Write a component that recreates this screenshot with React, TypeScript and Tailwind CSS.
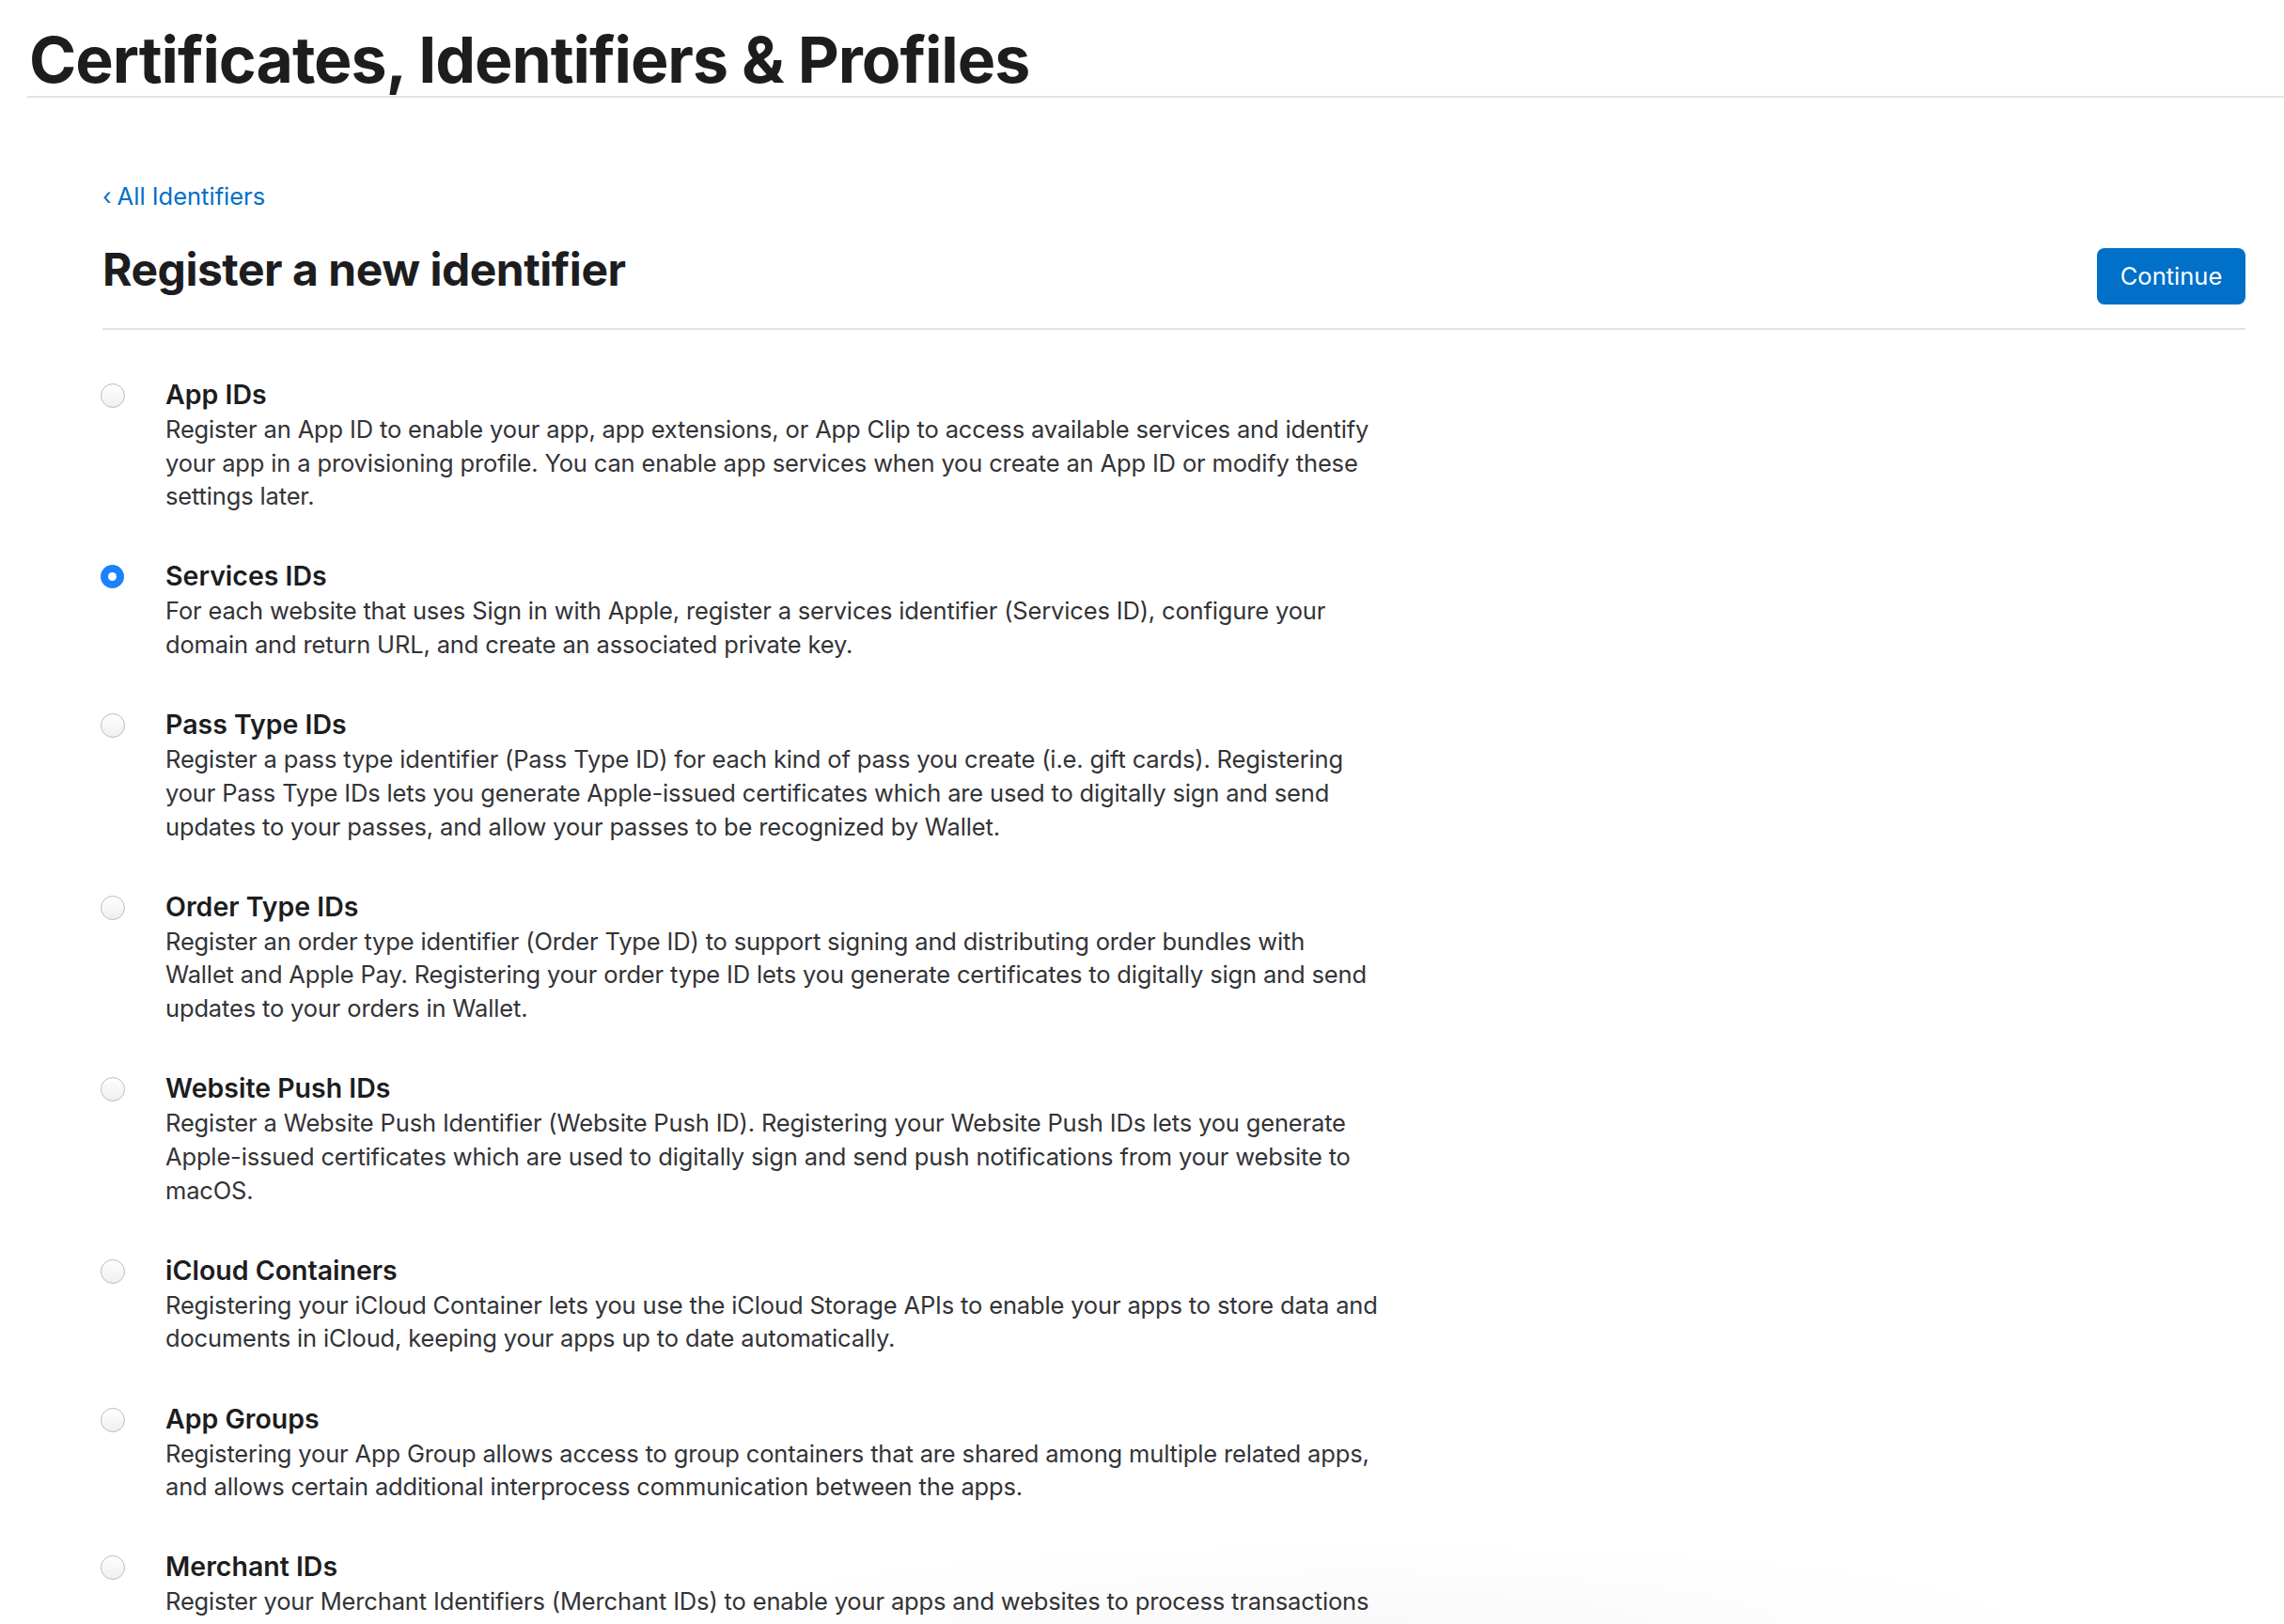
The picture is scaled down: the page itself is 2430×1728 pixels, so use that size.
import React, { useState } from "react";

type Identifier = {
	id: string;
	title: string;
	lines: string[];
};

const identifiers: Identifier[] = [
	{
		id: "app",
		title: "App IDs",
		lines: [
			"Register an App ID to enable your app, app extensions, or App Clip to access available services and identify",
			"your app in a provisioning profile. You can enable app services when you create an App ID or modify these",
			"settings later.",
		],
	},
	{
		id: "services",
		title: "Services IDs",
		lines: [
			"For each website that uses Sign in with Apple, register a services identifier (Services ID), configure your",
			"domain and return URL, and create an associated private key.",
		],
	},
	{
		id: "pass",
		title: "Pass Type IDs",
		lines: [
			"Register a pass type identifier (Pass Type ID) for each kind of pass you create (i.e. gift cards). Registering",
			"your Pass Type IDs lets you generate Apple-issued certificates which are used to digitally sign and send",
			"updates to your passes, and allow your passes to be recognized by Wallet.",
		],
	},
	{
		id: "order",
		title: "Order Type IDs",
		lines: [
			"Register an order type identifier (Order Type ID) to support signing and distributing order bundles with",
			"Wallet and Apple Pay. Registering your order type ID lets you generate certificates to digitally sign and send",
			"updates to your orders in Wallet.",
		],
	},
	{
		id: "push",
		title: "Website Push IDs",
		lines: [
			"Register a Website Push Identifier (Website Push ID). Registering your Website Push IDs lets you generate",
			"Apple-issued certificates which are used to digitally sign and send push notifications from your website to",
			"macOS.",
		],
	},
	{
		id: "icloud",
		title: "iCloud Containers",
		lines: [
			"Registering your iCloud Container lets you use the iCloud Storage APIs to enable your apps to store data and",
			"documents in iCloud, keeping your apps up to date automatically.",
		],
	},
	{
		id: "groups",
		title: "App Groups",
		lines: [
			"Registering your App Group allows access to group containers that are shared among multiple related apps,",
			"and allows certain additional interprocess communication between the apps.",
		],
	},
	{
		id: "merchant",
		title: "Merchant IDs",
		lines: [
			"Register your Merchant Identifiers (Merchant IDs) to enable your apps and websites to process transactions",
			"using Apple Pay.",
		],
	},
];

function Radio({ checked }: { checked: boolean }) {
	if (checked) {
		return (
			<span className="-ml-[2px] flex h-[25px] w-[25px] shrink-0 items-center justify-center rounded-full bg-[#1a82fb]">
				<span className="h-[9px] w-[9px] rounded-full bg-white" />
			</span>
		);
	}
	return (
		<span className="-ml-[2px] block h-[26px] w-[26px] shrink-0 rounded-full border border-[#bdbdbd] bg-gradient-to-b from-white to-[#efefef]" />
	);
}

export default function App() {
	const [selected, setSelected] = useState("services");

	return (
		<div className="min-h-screen bg-white font-['Inter','Liberation_Sans',sans-serif] text-[#1d1d1f]">
			<header className="pl-[31px] pt-[29px]">
				<h1 className="text-[68px] font-bold leading-none tracking-[-0.0155em]">
					Certificates, Identifiers &amp; Profiles
				</h1>
			</header>
			<div className="ml-[29px] mt-[5px] h-[2px] bg-[#e3e3e3]" />

			<main className="ml-[109px] mr-[41px]">
				<a
					href="#"
					className="mt-[87px] flex items-center gap-[6px] text-[25.5px] leading-[36px] text-[#0070c9]"
				>
					<span className="text-[25px]">‹</span>
					<span>All Identifiers</span>
				</a>

				<div className="mt-[36px] flex items-start justify-between">
					<h2 className="text-[48px] font-bold leading-none tracking-[-0.01em]">
						Register a new identifier
					</h2>
					<button
						type="button"
						className="mt-[1px] h-[60px] w-[158px] rounded-[8px] bg-[#0070c9] text-[25.5px] text-white"
					>
						Continue
					</button>
				</div>

				<div className="mt-[25px] h-[2px] bg-[#e3e3e3]" />

				<ul className="mt-[50px] flex flex-col gap-[48.5px]">
					{identifiers.map((item) => (
						<li
							key={item.id}
							className="flex cursor-pointer items-start"
							onClick={() => setSelected(item.id)}
						>
							<span className="mt-[7px] flex w-[67px] shrink-0">
								<Radio checked={selected === item.id} />
							</span>
							<div>
								<div className="text-[28.5px] font-semibold leading-[38px]">
									{item.title}
								</div>
								<p className="text-[25.5px] leading-[35.65px] tracking-[-0.006em] text-[#333336]">
									{item.lines.map((line, i) => (
										<span key={i} className="block whitespace-nowrap">
											{line}
										</span>
									))}
								</p>
							</div>
						</li>
					))}
				</ul>
				<div className="h-[80px]" />
			</main>

			{/* faint shade along the bottom edge of the window */}
			<div className="pointer-events-none fixed bottom-0 left-[700px] h-[90px] w-[1500px] bg-[radial-gradient(ellipse_at_bottom,rgba(0,0,0,0.025),transparent_70%)]" />
		</div>
	);
}
